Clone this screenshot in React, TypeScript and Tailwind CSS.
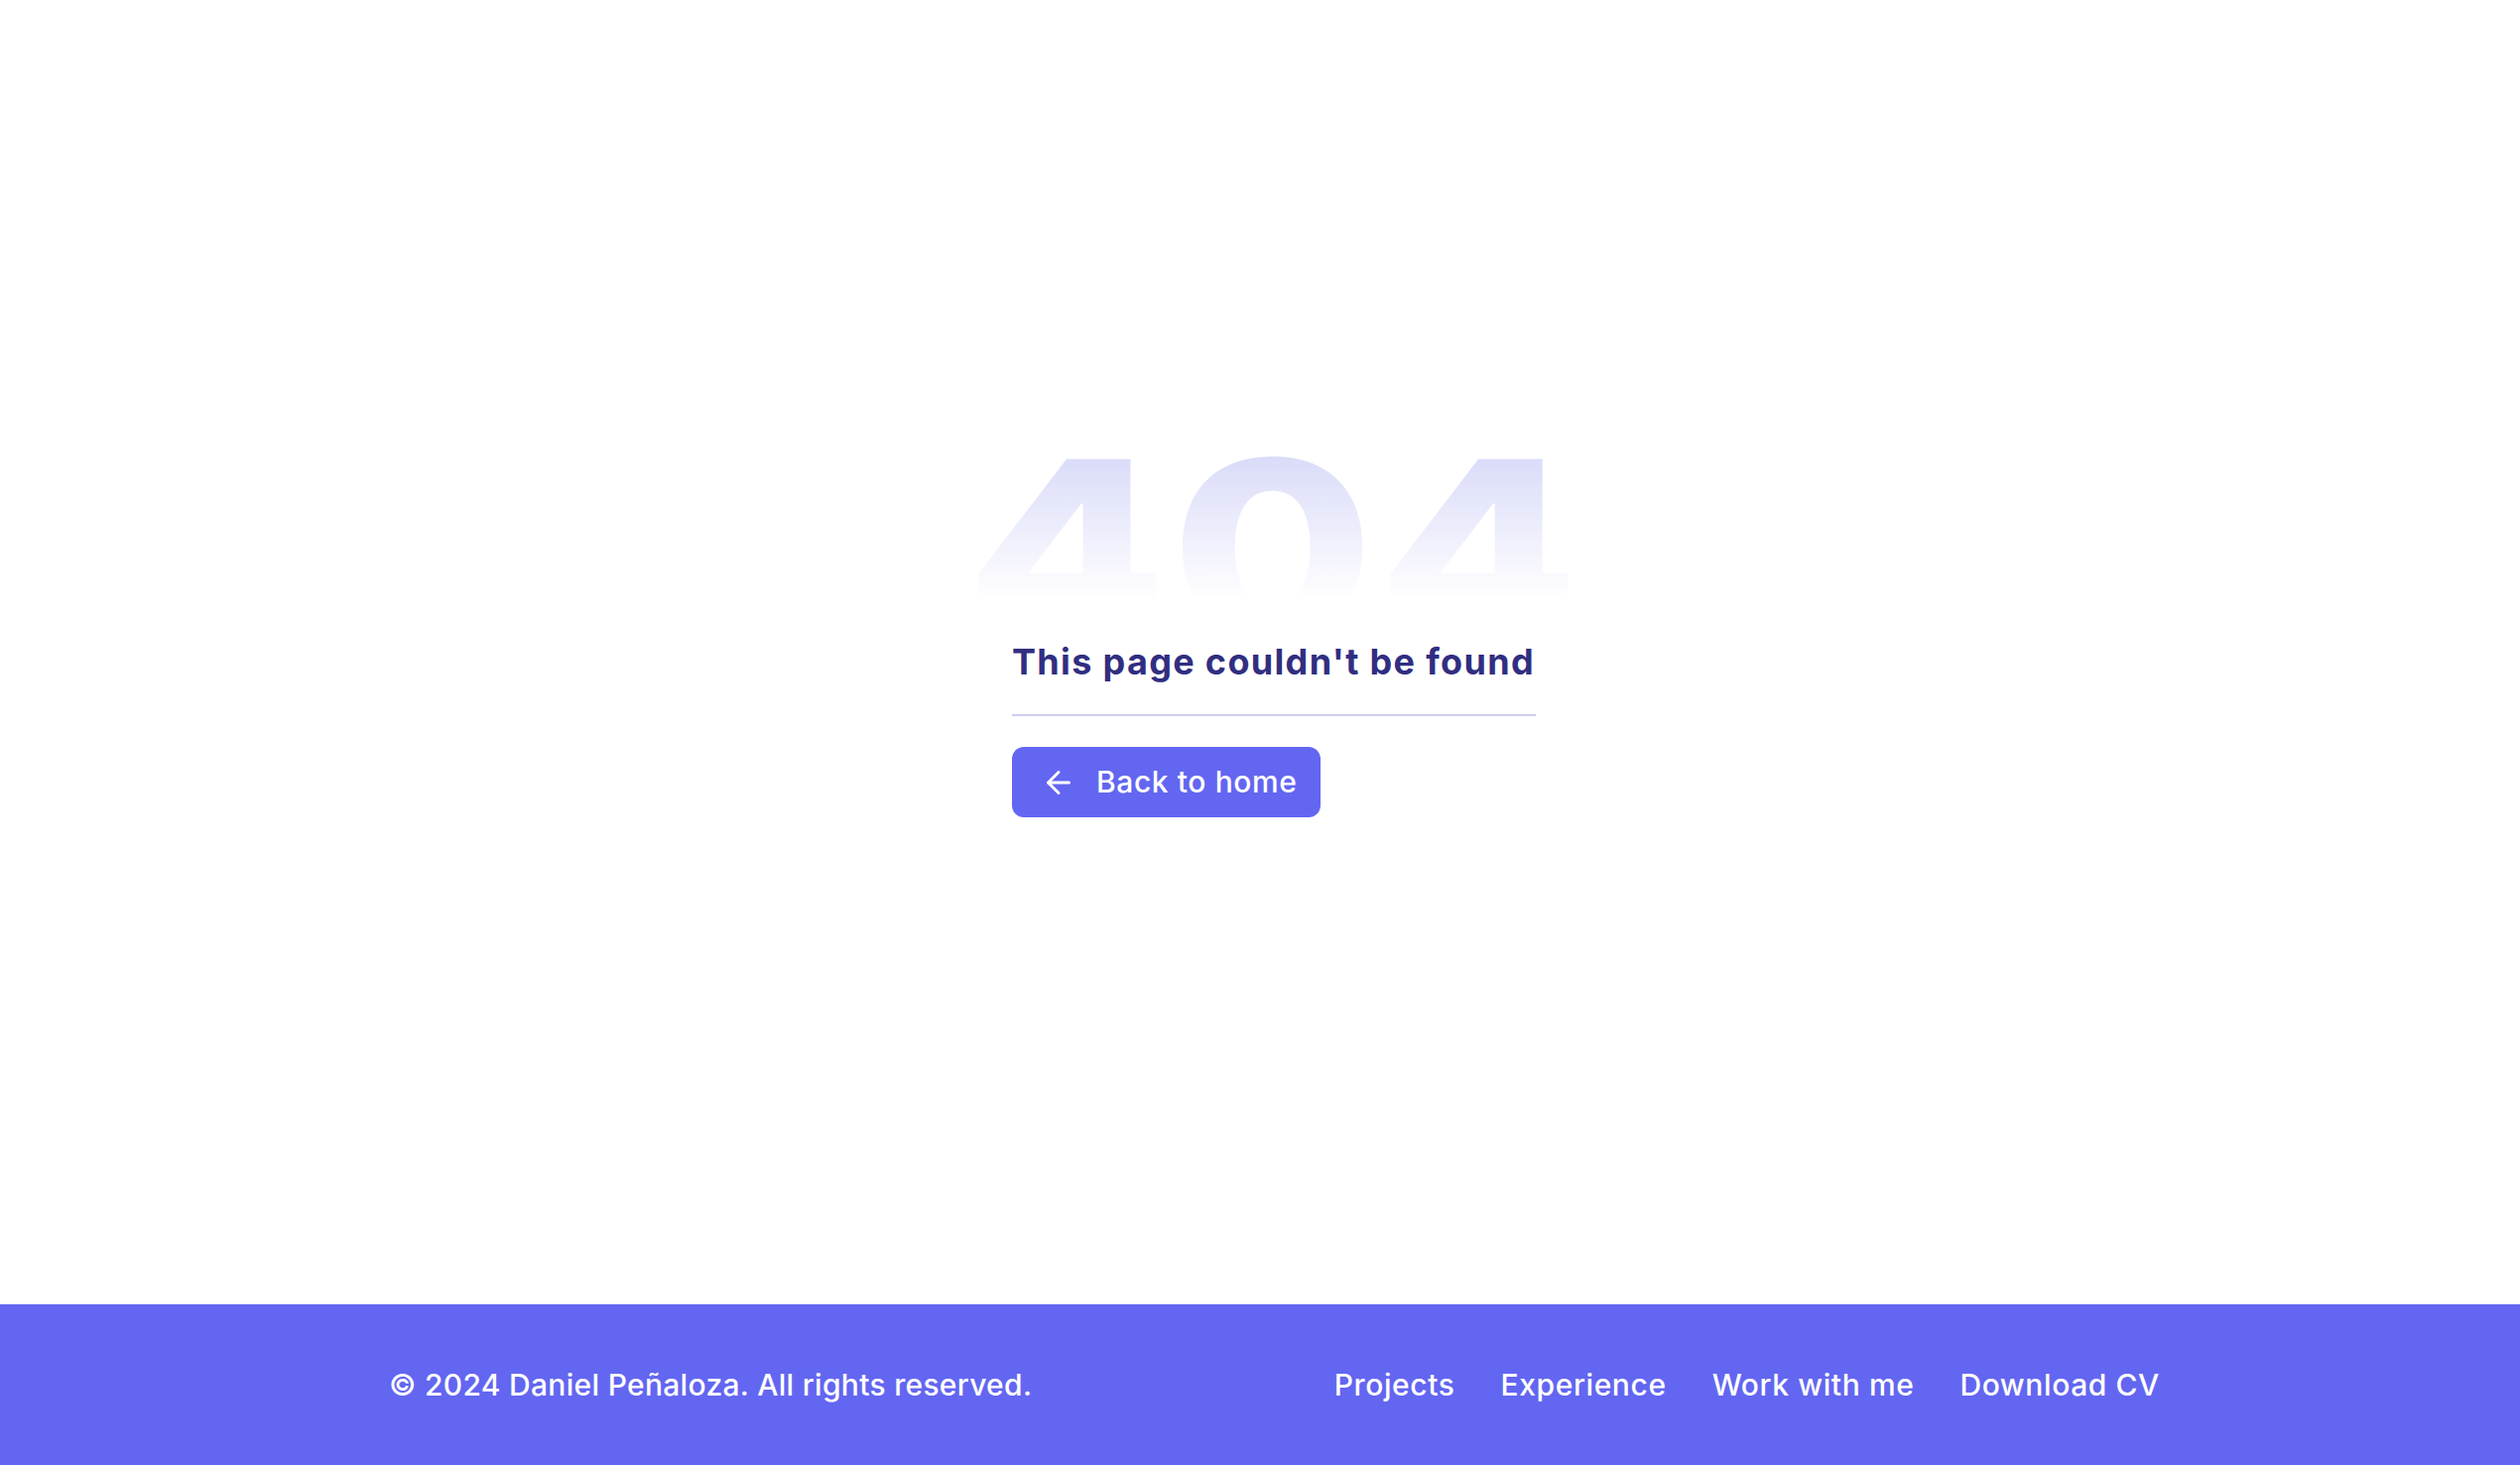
import { ArrowLeft } from 'lucide-react';

const links = ['Projects', 'Experience', 'Work with me', 'Download CV'];

export default function App() {
  return (
    <div className="flex min-h-screen flex-col bg-white font-['Inter',sans-serif]">
      <main className="flex h-[1315px] flex-col items-center pl-[28px] pt-[430px]">
        <div className="flex w-[528px] flex-col">
          <div className="-mx-[60px] flex h-[175px] justify-center">
            <span className="inline-block h-[175px] scale-x-[1.21] whitespace-nowrap bg-gradient-to-b from-[#d2d4f7] to-white/0 bg-clip-text text-[245px] font-extrabold leading-none tracking-[0.01em] text-transparent">
              404
            </span>
          </div>
          <h1 className="mt-[40px] whitespace-nowrap border-b-2 border-[#cbcdf1] pb-[30px] text-[36px] font-bold leading-tight tracking-[0.037em] text-[#312e81]">
            This page couldn't be found
          </h1>
          <button className="mt-[31px] flex h-[71px] w-[311px] items-center gap-[20px] rounded-[12px] bg-[#6366f1] pl-[29px] text-[30px] font-medium tracking-[0.02em] text-white">
            <ArrowLeft size={36} strokeWidth={2} />
            Back to home
          </button>
        </div>
      </main>
      <footer className="flex h-[162px] items-center justify-between bg-[#6366f1] pl-[392px] pr-[363px] text-[30px] font-medium text-white">
        <p className="tracking-[0.01em]">© 2024 Daniel Peñaloza. All rights reserved.</p>
        <nav className="flex gap-[46px] tracking-[0.02em]">
          {links.map((l) => (
            <a key={l} href="#">
              {l}
            </a>
          ))}
        </nav>
      </footer>
    </div>
  );
}
